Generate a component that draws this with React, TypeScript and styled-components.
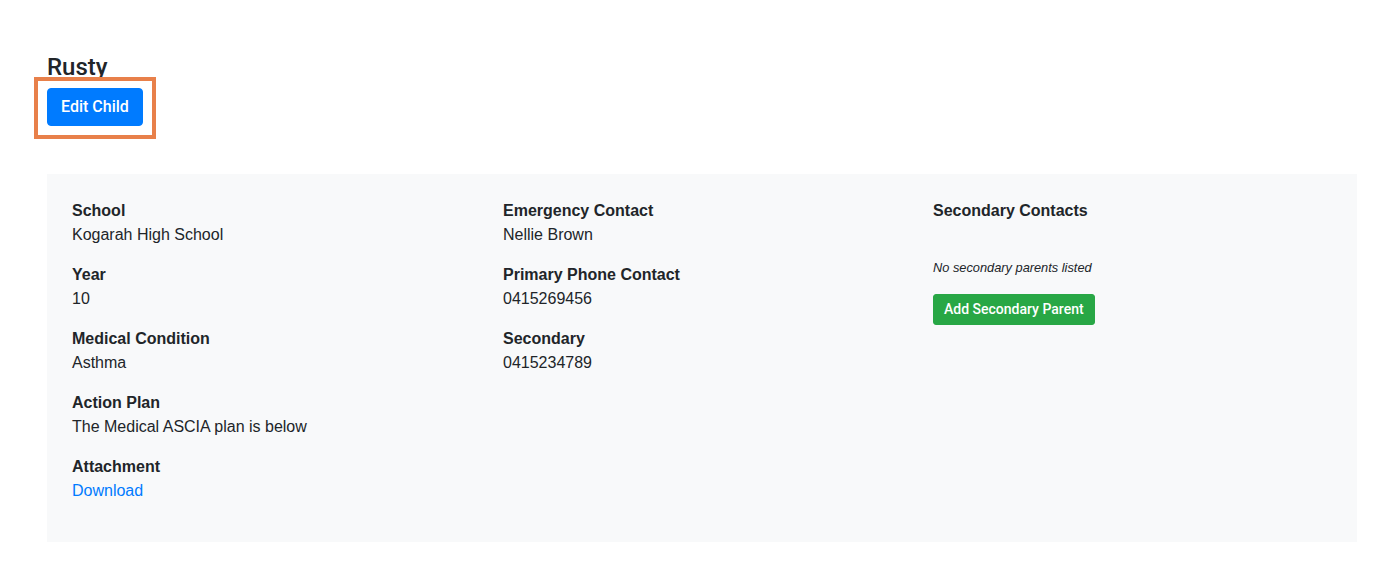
import styled, { createGlobalStyle } from "styled-components";

const GlobalStyle = createGlobalStyle`
    * {
        box-sizing: border-box;
    }

    body {
        margin: 0;
        background: #ffffff;
        color: #212529;
        font-family: "Liberation Sans", Arial, sans-serif;
        font-size: 16px;
        line-height: 1.5;
    }
`;

type Field = {
    label: string;
    value: string;
    link?: boolean;
};

const childInfo: Field[] = [
    { label: "School", value: "Kogarah High School" },
    { label: "Year", value: "10" },
    { label: "Medical Condition", value: "Asthma" },
    { label: "Action Plan", value: "The Medical ASCIA plan is below" },
    { label: "Attachment", value: "Download", link: true },
];

const contactInfo: Field[] = [
    { label: "Emergency Contact", value: "Nellie Brown" },
    { label: "Primary Phone Contact", value: "0415269456" },
    { label: "Secondary", value: "0415234789" },
];

const App = () => {
    return (
        <>
            <GlobalStyle />
            <Page>
                <Title>Rusty</Title>
                <Highlight>
                    <Button $variant="primary">Edit Child</Button>
                </Highlight>

                <DetailsPanel>
                    <Column>
                        {childInfo.map((field) => (
                            <FieldGroup key={field.label}>
                                <Label>{field.label}</Label>
                                {field.link ? (
                                    <Link href="#">{field.value}</Link>
                                ) : (
                                    <Value>{field.value}</Value>
                                )}
                            </FieldGroup>
                        ))}
                    </Column>

                    <Column>
                        {contactInfo.map((field) => (
                            <FieldGroup key={field.label}>
                                <Label>{field.label}</Label>
                                <Value>{field.value}</Value>
                            </FieldGroup>
                        ))}
                    </Column>

                    <Column>
                        <Label>Secondary Contacts</Label>
                        <EmptyNote>No secondary parents listed</EmptyNote>
                        <Button $variant="success" $small>
                            Add Secondary Parent
                        </Button>
                    </Column>
                </DetailsPanel>
            </Page>
        </>
    );
};

const Page = styled.div`
    padding: 53px 24px 30px 47px;
`;

const Title = styled.h4`
    margin: 0 0 6px;
    font-family: Roboto, "Liberation Sans", sans-serif;
    font-size: 24px;
    font-weight: 500;
    line-height: 1.2;
`;

// annotation frame drawn over the page around the button
const Highlight = styled.span`
    position: relative;
    display: inline-block;
    vertical-align: top;

    &::after {
        content: "";
        position: absolute;
        top: -11px;
        left: -13px;
        right: -13px;
        bottom: -13px;
        border: 4px solid #e8804a;
        pointer-events: none;
    }
`;

const Button = styled.button<{
    $variant: "primary" | "success";
    $small?: boolean;
}>`
    display: block;
    border: 1px solid transparent;
    border-radius: ${(p) => (p.$small ? "3px" : "4px")};
    padding: ${(p) => (p.$small ? "4px 10px" : "6px 13px")};
    font-family: Roboto, "Liberation Sans", sans-serif;
    font-size: ${(p) => (p.$small ? "14px" : "16px")};
    font-weight: 500;
    line-height: 1.5;
    color: #ffffff;
    cursor: pointer;
    background-color: ${(p) =>
        p.$variant === "primary" ? "#007bff" : "#28a745"};
    border-color: ${(p) => (p.$variant === "primary" ? "#007bff" : "#28a745")};
`;

const DetailsPanel = styled.div`
    margin-top: 48px;
    background: #f8f9fa;
    padding: 25px 24px 23px 25px;
    display: grid;
    grid-template-columns: 431px 430px 1fr;
`;

const Column = styled.div`
    display: flex;
    flex-direction: column;
    align-items: flex-start;
`;

const FieldGroup = styled.div`
    margin-bottom: 16px;
`;

const Label = styled.div`
    font-weight: 700;
`;

const Value = styled.div``;

const Link = styled.a`
    color: #007bff;
    text-decoration: none;
`;

const EmptyNote = styled.p`
    margin: 35px 0 17px;
    font-size: 12.8px;
    font-style: italic;
`;

export default App;
